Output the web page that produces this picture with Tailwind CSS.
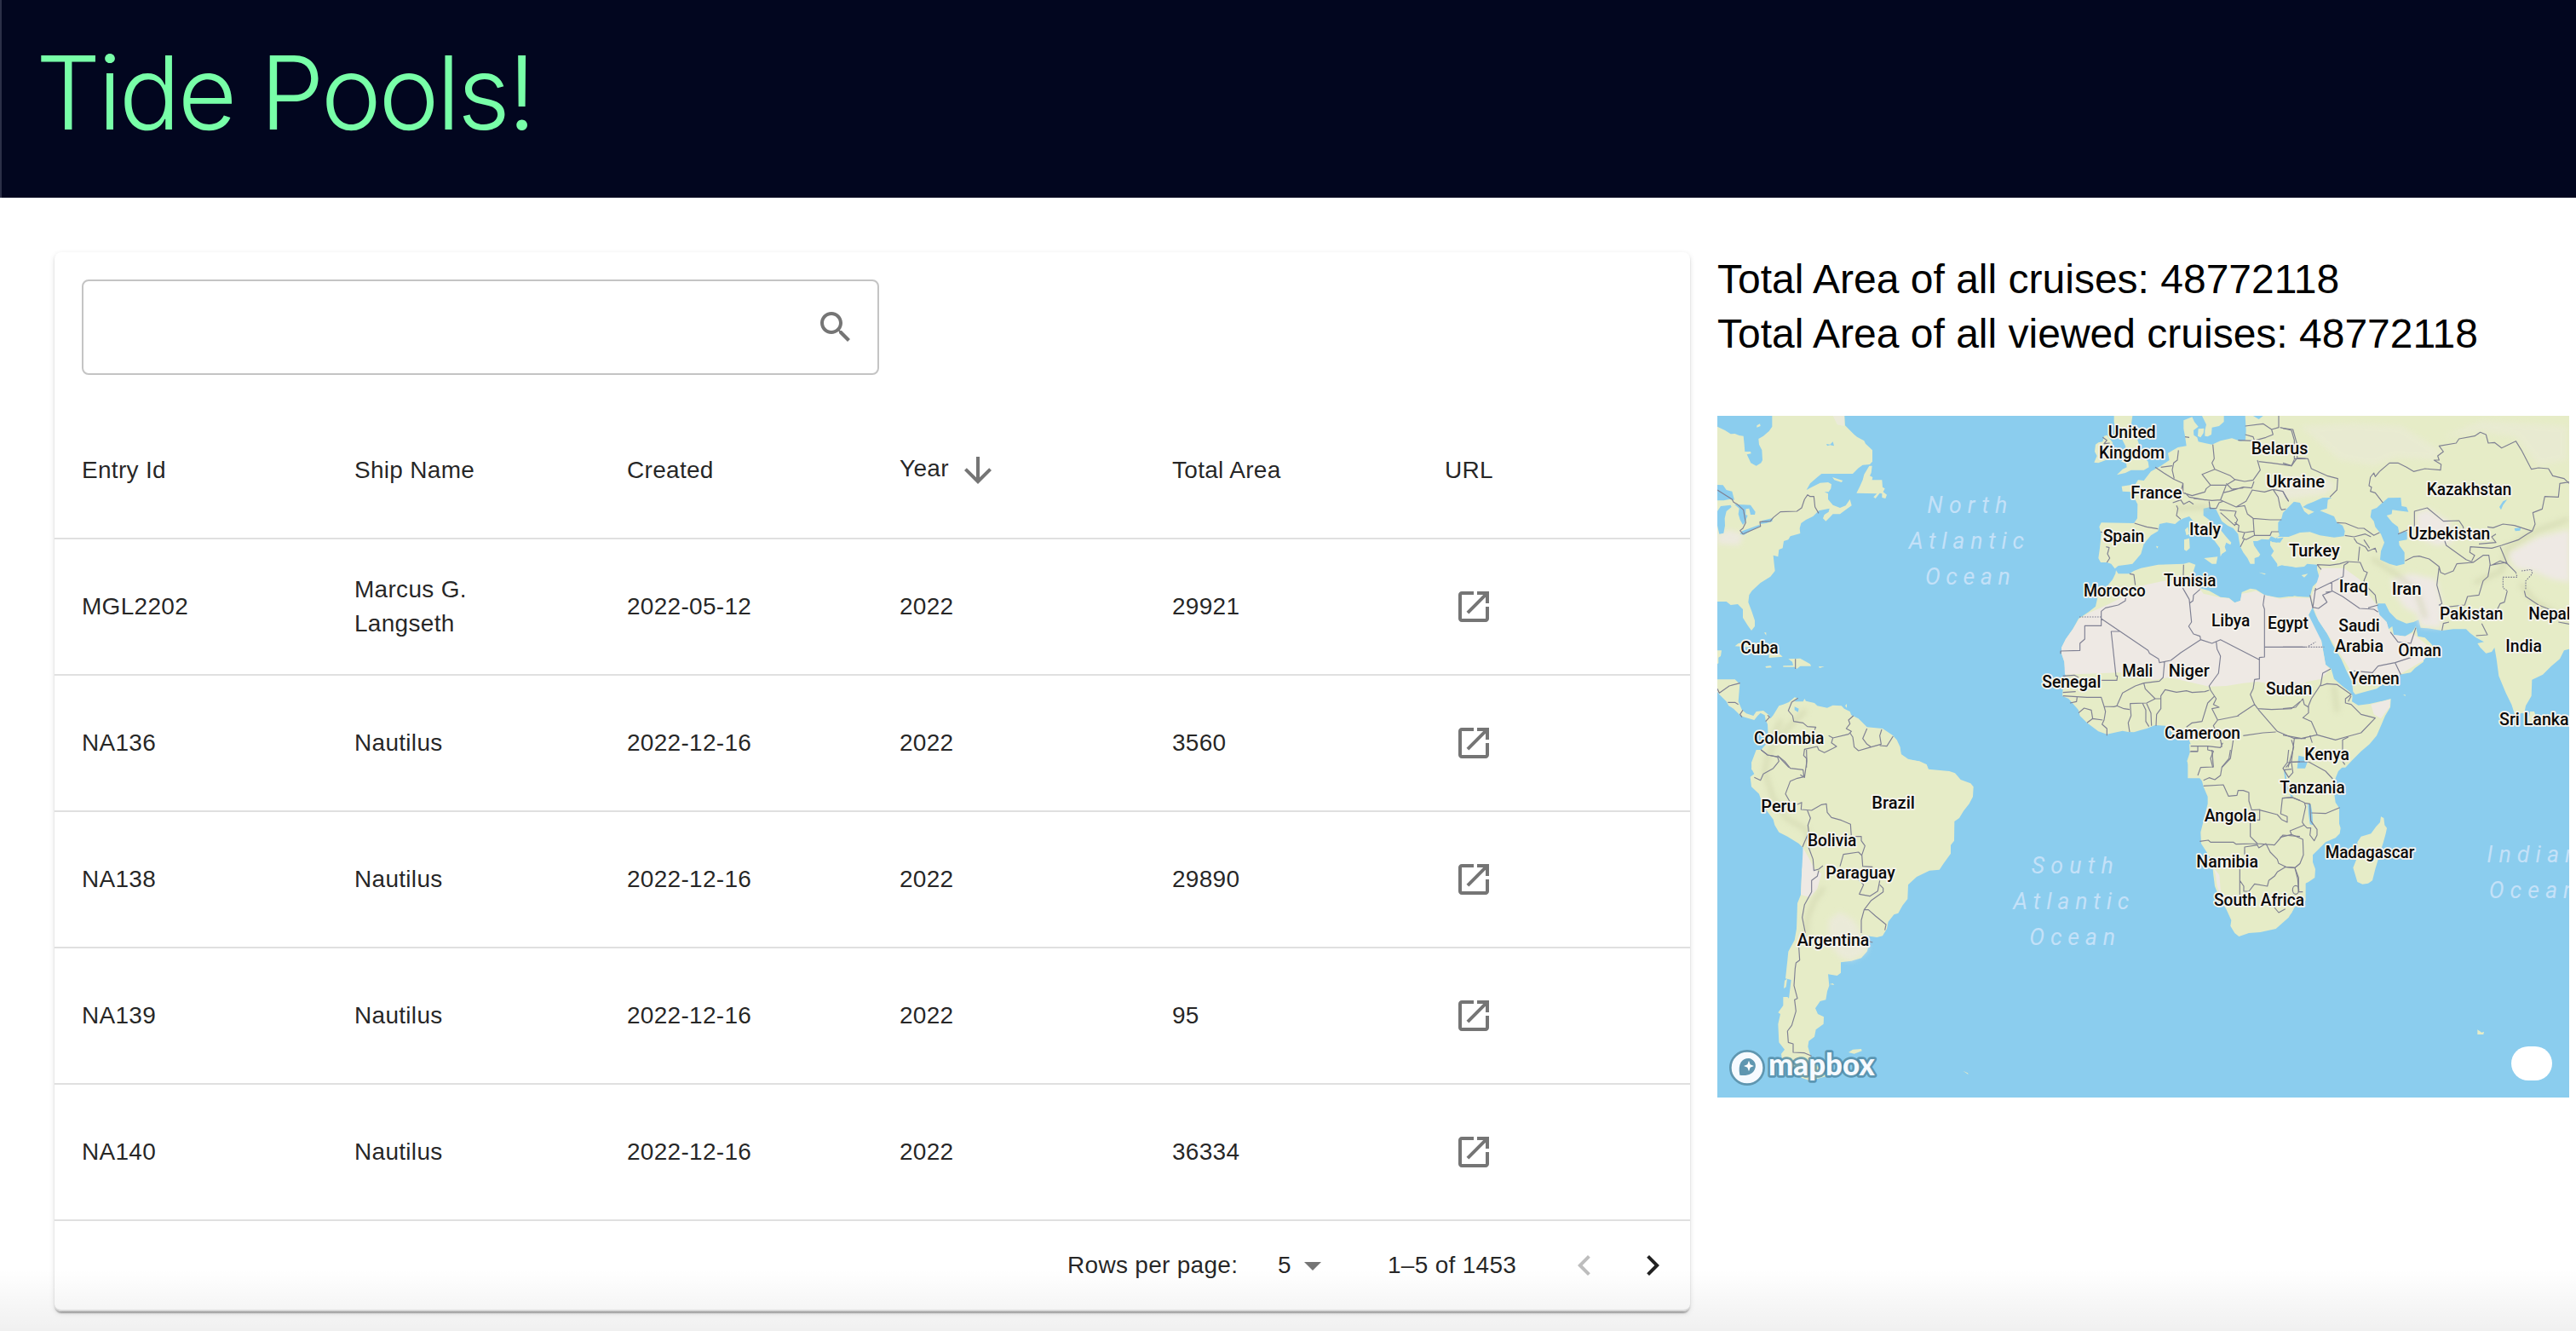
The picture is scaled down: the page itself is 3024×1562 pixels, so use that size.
<!DOCTYPE html>
<html lang="en">
<head>
<meta charset="utf-8">
<title>Tide Pools!</title>
<script src="https://cdn.jsdelivr.net/npm/@tailwindcss/browser@4"></script>
</head>
<body class="relative h-[1562px] w-[3024px] overflow-hidden bg-white font-['Liberation_Sans',Arial,sans-serif]">
<svg class="hidden">
  <symbol id="open" viewBox="0 0 24 24"><path d="M19 19H5V5h7V3H5c-1.11 0-2 .9-2 2v14c0 1.1.89 2 2 2h14c1.1 0 2-.9 2-2v-7h-2v7zM14 3v2h3.59l-9.83 9.83 1.41 1.41L19 6.41V10h2V3h-7z"/></symbol>
</svg>

<header class="flex h-[232px] items-start border-l-2 border-[#2b2f47] bg-[#02061f] pt-[37px] pl-10">
  <h1 class="font-['Inter',sans-serif] text-[120px] leading-[144px] font-light tracking-[-3.3px] whitespace-nowrap text-[#78ffa8]">Tide Pools!</h1>
</header>

<main class="flex gap-8 pt-16 pl-16">
  <section class="flex h-[1243px] w-[1920px] shrink-0 flex-col rounded-lg bg-white text-[28px] leading-10 tracking-[0.3px] text-black/87 shadow-[0_4px_2px_-2px_rgba(0,0,0,0.2),0_2px_2px_0_rgba(0,0,0,0.14),0_2px_6px_0_rgba(0,0,0,0.12)]">
    <div class="px-8 pt-8">
      <label class="flex h-28 w-[936px] items-center rounded-lg border-2 border-[#c4c4c4] pr-[25px]">
        <input class="h-full min-w-0 flex-1 px-6 outline-none" aria-label="Search">
        <svg class="size-12 fill-[#757575]" viewBox="0 0 24 24"><path d="M15.5 14h-.79l-.28-.27C15.41 12.59 16 11.11 16 9.5 16 5.91 13.09 3 9.5 3S3 5.91 3 9.5 5.91 16 9.5 16c1.61 0 3.09-.59 4.23-1.57l.27.28v.79l5 4.99L20.49 19l-4.99-5zm-6 0C7.01 14 5 11.99 5 9.5S7.01 5 9.5 5 14 7.01 14 9.5 11.99 14 9.5 14z"/></svg>
      </label>
    </div>
    <div class="mt-[33px] grid h-40 grid-cols-6 items-center border-b-2 border-[#e0e0e0] *:pl-8">
      <div>Entry Id</div><div>Ship Name</div><div>Created</div>
      <div class="flex items-center"><span class="-mt-1">Year</span><svg class="ml-2.5 size-12 fill-[#757575]" viewBox="0 0 24 24"><path d="m20 12-1.41-1.41L13 16.17V4h-2v12.17l-5.58-5.59L4 12l8 8 8-8z"/></svg></div>
      <div>Total Area</div><div>URL</div>
    </div>
    <div class="grid h-40 grid-cols-6 items-center border-b-2 border-[#e0e0e0] *:pl-8">
      <div>MGL2202</div><div>Marcus G.<br>Langseth</div><div>2022-05-12</div><div>2022</div><div>29921</div><div><svg class="ml-2.5 size-12 fill-[#757575]"><use href="#open"/></svg></div>
    </div>
    <div class="grid h-40 grid-cols-6 items-center border-b-2 border-[#e0e0e0] *:pl-8">
      <div>NA136</div><div>Nautilus</div><div>2022-12-16</div><div>2022</div><div>3560</div><div><svg class="ml-2.5 size-12 fill-[#757575]"><use href="#open"/></svg></div>
    </div>
    <div class="grid h-40 grid-cols-6 items-center border-b-2 border-[#e0e0e0] *:pl-8">
      <div>NA138</div><div>Nautilus</div><div>2022-12-16</div><div>2022</div><div>29890</div><div><svg class="ml-2.5 size-12 fill-[#757575]"><use href="#open"/></svg></div>
    </div>
    <div class="grid h-40 grid-cols-6 items-center border-b-2 border-[#e0e0e0] *:pl-8">
      <div>NA139</div><div>Nautilus</div><div>2022-12-16</div><div>2022</div><div>95</div><div><svg class="ml-2.5 size-12 fill-[#757575]"><use href="#open"/></svg></div>
    </div>
    <div class="grid h-40 grid-cols-6 items-center border-b-2 border-[#e0e0e0] *:pl-8">
      <div>NA140</div><div>Nautilus</div><div>2022-12-16</div><div>2022</div><div>36334</div><div><svg class="ml-2.5 size-12 fill-[#757575]"><use href="#open"/></svg></div>
    </div>
    <div class="flex flex-1 items-center rounded-b-lg border-b-2 border-[#e0e0e0] pl-[1189px]">
      <span class="w-[247px]">Rows per page:</span>
      <span class="w-[17px]">5</span>
      <svg class="size-12 fill-[#757575]" viewBox="0 0 24 24"><path d="m7 10 5 5 5-5z"/></svg>
      <span class="ml-16 w-[207px] whitespace-nowrap">1–5 of 1453</span>
      <svg class="size-12 fill-black/26" viewBox="0 0 24 24"><path d="M15.41 16.59 10.83 12l4.58-4.59L14 6l-6 6 6 6 1.41-1.41z"/></svg>
      <svg class="ml-8 size-12 fill-black/87" viewBox="0 0 24 24"><path d="M8.59 16.59 13.17 12 8.59 7.41 10 6l6 6-6 6-1.41-1.41z"/></svg>
    </div>
  </section>

  <section class="w-[1000px] shrink-0">
    <div class="mb-16 text-[48px] leading-16 whitespace-nowrap text-black">
      <p>Total Area of all cruises: 48772118</p>
      <p>Total Area of all viewed cruises: 48772118</p>
    </div>
    <svg class="block h-[800px] w-[1000px] bg-[#8bcdee]" viewBox="18 24 3000 2400" font-family="Roboto, sans-serif">
      <defs><filter id="soft" x="-20%" y="-20%" width="140%" height="140%"><feGaussianBlur stdDeviation="10"/></filter></defs>
      <!-- land -->
      <g fill="#e6ecc7">
        <!-- North America, Caribbean, north of South America -->
        <g>
          <path d="M18 62 45 75 65 88 80 87 95 93 110 95 113 125 115 150 135 150 137 157 122 160 136 190 155 200 172 190 177 180 175 145 165 125 163 105 180 95 200 78 211 62V24H466L468 58 485 75 500 90 510 98 535 112 540 122 564 145V185L555 195 530 197 515 208 495 228H385L370 240 345 262 332 285 350 275 380 260 408 258 420 265 418 280 410 292 395 292 408 298V318L425 338 450 348 470 340 485 318 491 340 470 355 450 370 425 370 415 380 400 395 390 385 395 372 410 362 413 350 375 358 355 378 330 390 313 402 308 420 310 438 275 448 268 460 252 465 248 490 235 495 232 520 215 515 218 545 221 570 205 590 170 612 140 640 130 655 127 680 140 715 150 745V765L138 780 125 762 108 735V705L90 687 65 690 50 678H18Z"/>
          <path d="M553 200 563 200 560 225 555 235 565 240 563 250H598L600 275 608 280 602 292 615 302 610 315 598 312V298L590 296 575 315 568 310 580 298 508 296 520 272 530 250 535 230ZM423 240 460 252 455 258 430 250ZM157 58 168 52 170 60 157 65ZM80 835 92 825 110 822 150 822 200 850 240 865 248 872 200 876V865L150 840ZM187 906 205 904 210 910 190 911ZM268 880 310 878 345 898 348 905 310 905 298 915 290 908 250 908V904L285 903 282 890ZM375 906 395 907 378 912ZM183 787 190 787 190 797ZM18 850 33 850 30 870 22 875 22 895 18 898Z"/>
          <path d="M18 952H80L97 968 92 1030 105 1060 120 1072 145 1080 155 1065 180 1062 200 1078 205 1090 215 1078 235 1045 250 1040 270 1032 290 1015 300 1018 290 1030 320 1030 325 1020 330 1028 360 1035 370 1045 405 1052 425 1043 455 1045 465 1055 485 1065 490 1078 515 1090 545 1120 600 1125 635 1148 650 1165 662 1190 665 1215 690 1232 725 1240 755 1252 760 1270H138L140 1245 155 1220 172 1200 190 1180 197 1150 195 1110 188 1095 185 1078 170 1070 160 1080 148 1095 130 1090 115 1085 100 1080 75 1055 58 1045 50 1030 25 1005 18 995ZM468 1045 474 1038 474 1052Z"/>
        </g>
        <!-- South America -->
        <g transform="translate(0 1200)">
          <path d="M155 0H662L665 16 690 35 730 40 755 52 762 68 835 75 855 82 875 105 910 118 920 130 918 165 905 190 885 215 870 240 853 252 852 320 840 335V365L815 400 800 422 765 425 745 435 720 447 690 475 688 525 670 548 655 575 640 580 620 605 615 630 600 655 580 660 545 655 525 652 550 672 552 690 545 710 525 733 490 743 453 748V785L440 795 408 790 412 830 405 850 400 880 380 885 363 910 372 930 393 940 392 965 365 985 360 1010 340 1025 337 1045 350 1090 385 1130 400 1150 345 1165 315 1155 290 1130 245 1085 243 1070 255 1055 235 1030 232 965 240 930 232 925 250 900V870L265 870 270 875 278 810 258 805 265 740 268 710 290 670 297 630 300 540 312 510 316 420 322 400 320 345 305 330 265 305 235 290 220 265 215 245 185 205 170 170 165 155 138 130 134 95 148 85 140 70 138 45Z"/>
          <path d="M480 1065 495 1055 525 1053 527 1060 500 1070ZM883 1130 900 1138 902 1143ZM413 825 425 822 430 828ZM252 840 255 812 264 806 260 835Z"/>
        </g>
        <!-- Europe and north-west Africa -->
        <g transform="translate(990 0)">
          <path d="M425 24H490L485 60 500 85 515 130 530 170 545 185 548 205 530 215 485 215 465 225 435 232 455 212 470 205 468 190 450 185 470 165 465 130 450 100 430 70 425 45ZM370 118 385 115 390 95 400 92 420 118 415 150 410 175 370 190 355 188 365 165 357 150 360 125Z"/>
          <path d="M670 40 700 28 708 45 722 62 705 75 706 92 718 100 722 115 745 120 770 125 800 112 840 103 870 113 888 110 890 75 887 24H1100V325H1060L1040 345 1020 365 1015 385 1003 400V430L1008 445 995 455 978 448 970 460 945 458 930 465 915 465 918 480 940 512 935 520 920 525V545H905L895 525 880 505 870 485 865 460 862 440 845 420 825 410 805 395 795 375 785 355 765 345 740 350V375L760 390 770 405 800 425 820 450 838 470 835 478 820 470 815 485 820 500 805 510 800 520 798 490 780 465 760 445 735 430 720 410 700 390 690 378 670 385 655 392 640 405 610 400 585 405 580 430 555 445 530 475 520 510 490 545 470 548 440 552 428 562 415 545 400 540H378L370 525 375 490 380 440 373 415 380 400 495 402 507 385 508 335 495 310 485 292 455 290 452 272 500 265 510 250 530 252 555 220 590 200 620 180 615 155 650 135 680 130 675 95 670 70Z"/>
          <path d="M735 24H812V45L795 60 770 65 768 90 755 97 745 95V75L750 55ZM722 70 742 68 740 85 730 100 720 95ZM672 460 690 455 692 490 680 500 672 495ZM675 425 685 415 690 440 680 445ZM742 525 790 520 785 545 770 545ZM935 575 960 580 955 583ZM573 482 581 484 577 491ZM975 465 1000 470 1040 468 1100 440V548L1060 555 1025 552 1000 545 978 515 988 500 975 480Z"/>
          <path d="M432 568 440 580H480L495 570 520 560 580 548 670 545 690 540 712 548 705 570 712 590 705 600 725 630 760 640 800 662 830 665 850 682 870 675 875 645 905 632 925 635 955 655 1010 665 1030 670 1060 658 1100 665V1300H685V1240L695 1205V1180L685 1155 670 1150 640 1150 605 1115 570 1113 540 1125 520 1130 495 1138 475 1137 455 1133 400 1145 370 1135 330 1105 305 1080 300 1060 265 1020 243 1010 245 985 240 970 255 940 250 890 240 860V840L255 810 280 775 300 738 335 715 360 695 370 650 400 625 420 600 430 580Z"/>
        </g>
        <!-- Asia, Arabia and the Horn of Africa -->
        <g transform="translate(2010 0)">
          <path d="M-20 24H1010V845L990 850 975 880 945 905 915 935 877 953 875 1010 855 1045 850 1070 815 1072 805 1040 785 1000 760 940 752 880 745 840 735 855 715 860 695 840 685 825 708 820 680 805 660 790 645 775H600L560 780 510 772 485 770 478 742 460 750 435 755 400 740 375 715 360 685H335L330 695 340 725 365 750 372 775 385 765 390 795 430 800 455 785 468 765 475 800 500 805 525 830 530 850 520 865 495 880V890L465 912 450 928 410 935 370 955 330 985 290 995 255 1005 247 995 243 960 225 925 205 880 175 830 155 790 125 745 115 725 105 700 95 660 105 625 130 600 120 565V548L85 545 75 555 45 558 0 548-20 555V450L20 450 60 435 95 433 130 445 180 452 215 448 218 430 210 410 190 400 180 378 160 370 130 358 155 350 158 320 172 312H140L105 328 85 335 70 345 110 362 90 372 75 360 60 330 30 325H-20Z"/>
          <path d="M-20 665 20 660 50 660 95 662 103 700 90 725 105 760 120 795 135 815 145 870 150 900 170 915 180 950 215 980 235 995 245 1010 243 1030 265 1043 305 1038 350 1028 380 1020 378 1050 360 1080 345 1115 330 1150 305 1180 275 1205 245 1235 220 1262H-20ZM65 585 88 580 75 593ZM870 1065 885 1065 893 1090 890 1110 875 1120 865 1095ZM423 1006 431 1006 431 1011Z"/>
        </g>
        <!-- Southern Africa -->
        <g transform="translate(990 1200)"><path d="M690-20 692 10 682 40 690 60 720 90 735 110 740 130 755 165V190L745 230 730 290 732 330 745 350 770 390 775 440 780 480 800 530 820 560 838 600 835 620 850 645 865 657 900 645 940 642 995 630 1040 590 1060 555 1100 530V-20Z"/></g>
        <g transform="translate(2010 1200)"><path d="M-20-20H285L265 0 225 45 195 75 185 100 180 150 185 185 198 205V260L203 275 200 295 185 310 150 325 125 350 105 370V395L114 420 112 450 90 465 70 475 60 520 45 545 30 575 0 605-20 615ZM345 235 355 240 358 265 366 275 362 295 355 320 340 370 325 420 315 460 300 470 280 473 262 465 253 435 247 415 265 370 262 325 275 305 310 295 328 270 342 255ZM685 985 700 995 708 992 706 1002 685 1002Z"/></g>
      </g>
      <!-- dry regions -->
      <g fill="#eee9e4">
        <path transform="translate(990 0)" d="M303 738 340 716 400 690 460 660 530 620 600 605 660 605 700 612 725 630 740 650 800 664 830 667 850 682 870 675 875 650 905 645 925 640 955 655 1010 668 1060 664 1100 665V965L1000 972 930 960 880 965 820 975 760 977 620 945 560 955 530 930 440 928 252 935 250 890 240 860V840L255 810 280 775Z"/>
        <g transform="translate(2010 0)">
          <path d="M-20 670 95 665 103 700 90 725 135 815 150 900 165 915 135 950 60 965-20 965ZM108 700 100 660 115 625 135 560 215 560 270 600 300 650 330 690 340 725 365 750 372 775 390 795 430 800 455 790 475 805 525 845 495 885 410 935 330 975 260 960 225 900 175 820 125 745ZM310 1040 378 1022 375 1050 345 1090 320 1075Z"/>
          <path d="M380 600 450 580 540 600 560 690 555 770 485 765 470 720 430 700 400 660ZM790 510 900 450 1010 425V610L950 600 880 570 820 560ZM470 365 510 352 590 400 600 470 540 480 470 450Z" filter="url(#soft)"/>
          <path d="M-20 240 150 245 185 270 150 300 30 315-20 315Z" opacity=".6" filter="url(#soft)"/>
          <path d="M60 60 250 50 420 60 560 150 530 180 400 170 320 200 200 180ZM560 100 700 40 1000 60 1000 180 900 200 820 100 700 80Z" opacity=".35" filter="url(#soft)"/>
        </g>
        <path transform="translate(0 1200)" d="M320 345 340 380 360 420 385 435 370 490 345 520 312 510 316 420Z"/>
        <path transform="translate(0 1200)" d="M410 600 450 570 500 600 525 650 550 690 540 715 490 743 450 730 410 680Z" opacity=".6" filter="url(#soft)"/>
        <path d="M18 440 60 425 110 440 95 480 18 475Z" opacity=".8" filter="url(#soft)"/>
        <path d="M425 24H465V60L440 55Z" opacity=".6"/>
        <path d="M1765 1615 1773 1640 1778 1680 1800 1735 1790 1690 1786 1640Z"/>
      </g>
      <!-- relief -->
      <g fill="none" stroke="#c9cda6" stroke-width="16" stroke-linecap="round" stroke-linejoin="round" opacity=".5" filter="url(#soft)">
        <path d="M325 1065 280 1110 230 1160 195 1225 185 1280 215 1370 260 1440 330 1480 345 1530M390 1690 360 1730 335 1790 330 1850M240 1100 215 1150"/>
        <path d="M2330 530 2400 575 2480 640 2510 730M2690 610 2780 570 2800 490 2900 430 3010 390M2850 620 2900 680 3010 740M1640 350 1740 345M2190 980 2200 1060"/>
      </g>
      <!-- lakes and inland seas -->
      <g fill="#8bcdee">
        <path d="M18 267 38 268 50 285 70 290 78 320 60 318 40 322 18 322ZM18 360 30 342 65 338 68 345 50 360 44 385 45 410 40 437 25 440 18 410ZM78 335 135 338 152 362 150 372 135 372 130 350 118 352 118 372 125 375 115 400 108 408 98 390 92 370 95 350ZM98 440 105 430 165 408 170 412 130 432 112 443ZM168 405 175 393 210 385 212 395 190 402ZM402 123 415 125 425 115 429 130 415 127 405 130ZM290 1048 305 1055 302 1067 290 1060Z"/>
        <path transform="translate(2010 0)" d="M350 330 370 313 415 312 418 342 435 345 442 362 405 358 385 355 383 370 365 375 385 400 405 415 410 440 425 430 437 432V460L408 465 410 480 428 505V545L400 552 375 545 342 530 345 500 357 470 345 440 325 415 320 395 308 380 312 355 330 348ZM790 318 775 338 768 355 762 345 775 325ZM815 420 838 418 835 428 818 430ZM2 452-10 470-40 468-35 458Z"/>
        <path transform="translate(2010 1200)" d="M55 20 75 25 88 38 78 65 50 65ZM88 190 98 192 103 220 106 265 95 262 90 225ZM3 70 8 72 17 130 36 165 28 165 10 130Z"/>
        <path d="M1905 24H1940L1925 36Z"/>
      </g>
      <!-- borders -->
      <g fill="none" stroke="#7f8093" stroke-width="3.5" stroke-linejoin="round">
        <path d="M18 285 70 318 75 328 88 335 110 355 118 400 108 420 98 428 108 440 170 413 168 397 205 395 215 382 240 362 298 360 315 348 325 318 336 302 345 308 358 308 362 345 375 367M18 985 25 1000 60 975 98 965M55 1033 80 1033 92 1040M108 1060 98 1075 105 1085M195 1078 202 1085 188 1100M302 1018 280 1032 268 1062 283 1080 287 1100 320 1105 335 1118 365 1120 360 1130M410 1150 425 1158 480 1145 490 1135 472 1125 485 1108 480 1095 497 1080M485 1140 495 1155 500 1190 515 1203 560 1190 545 1180 530 1160 545 1125M560 1190 595 1180 590 1150 597 1128M590 1185 615 1187 637 1152M425 1158 420 1175 438 1188 425 1195 395 1210 375 1200 370 1188 325 1198 322 1220 332 1230V1262M172 1200 195 1218 235 1225 270 1262M293 880V915"/>
        <path transform="translate(0 1200)" d="M172 0 195 18 230 25 235 40 215 65 180 85 170 107 148 97M230 20 255 40 275 65 320 70 323 95 300 100 275 110 258 155 275 185M332 0 333 40 325 97 310 88M300 192 315 185 313 210 350 213 385 193 402 190 405 220 420 238 455 248 487 262 490 305H525V320L538 338 527 370 530 410 565 412M335 213 346 240 337 265 340 290 325 325 318 342M335 300 340 345 355 385 358 425 375 420 390 408M375 425 370 445 350 460 350 500 325 545 317 590 328 645M305 695 308 740 295 750 292 770 288 830 300 875 290 880 295 920 280 970 265 990 268 1030 285 1035V1065L325 1067 350 1078M450 410 462 368 515 360 527 372M485 445 520 460 533 475 518 508 555 515 583 497 590 460M590 475 602 487V500L560 530 535 563 525 600V645M535 563 550 563 575 585 612 615 608 635M545 672 565 678"/>
        <path transform="translate(990 0)" d="M480 580 495 583 500 620M466 665 465 675 440 690 395 700 380 712V763H322V810L305 825V850L237 852V862M380 738 545 850 550 860 582 880 585 893 625 885 660 858 730 812 728 800 705 792 688 765 698 750 690 670 668 632 670 548M728 635 705 655 703 675 692 683M730 812 770 825 800 812 937 883M445 783H415L432 940 437 940 435 955H380M955 655 950 690 955 705V873L937 875V950L920 952 915 985 905 1005 920 1040M955 838H1090M785 820 788 845 800 870 793 930 760 975 765 990M603 890 598 945 585 958 530 965 500 975 455 1000 435 1045M760 990 745 995 700 998 680 992 645 997 605 988 590 1010V1055L575 1075 573 1115M530 965 535 985 570 1020 540 1035 482 1037 485 1080 475 1105 480 1137M540 1037 555 1070 557 1115M525 1035 537 1060V1100L548 1118M570 1020 590 1020M435 1045 425 1048 390 1047 380 1015 330 1015 245 1010M245 998 290 995M245 940 285 937 300 945M435 1045 460 1055 480 1058M390 1047 395 1065 390 1095 383 1110 400 1125V1150M300 1070 320 1053 345 1060 350 1090 330 1105M350 1090 385 1095M270 1035 293 1030 295 1015M765 990 785 1020 775 1040 795 1050 770 1055 790 1095 865 1080M780 1010 755 1035 735 1100 700 1105 680 1120M790 1095 775 1115 800 1165 805 1190M860 1080 920 1040 935 1060 1000 1135 1060 1160 1100 1160M880 1150 950 1140 995 1137M695 1187 755 1187 800 1192 808 1175M695 1205H720V1187M755 1187V1200L775 1205 765 1230 773 1262M845 1165 835 1230 805 1262M1060 1160 1050 1240 1030 1262M930 1055 980 1058 1050 1055 1080 1030"/>
        <path transform="translate(990 0)" d="M497 402 540 415 580 422M378 432 385 435M397 485 408 488 402 510 410 525 400 540M570 205 600 225 635 247 668 262 660 290M652 145 648 180 635 190 630 215 637 245M590 205 630 200M385 100 400 110 390 122 410 120M668 262V295L700 305 745 292 750 280 765 268 735 230 780 212 770 190 778 175 773 125M780 212 835 235 850 248 885 255 915 250 940 215 930 180M765 268 820 268 850 250M820 268 808 300 800 320 770 322 705 315M632 330 660 320 670 335 690 325 705 335M645 340 650 350 645 375 660 388M675 295 690 310 745 320M808 295 830 290 880 275 910 278 918 255M820 262 840 282 880 278M800 320 855 345 890 325 912 285M910 285 955 292 985 283 1003 310 1010 345 1015 355 1030 352M760 325 763 350 785 350 795 330 808 325M797 355 855 360 850 375 860 390 850 410 800 365M855 345 885 340 895 370 915 385 975 390 1015 390M915 385 918 430 885 435 862 430 865 410 850 400M918 430 920 445 975 445 980 432 1005 432M885 435 878 455 890 460 920 445M885 455 870 485M985 283 1020 290 1030 310 1040 325M862 110 920 112M887 90 915 98 920 112M887 60 950 52 980 72 1005 65V24M980 72 985 90 960 100 925 110M1010 65 1050 75 1060 110V175L1100 175M935 185 980 190 1050 200 1060 178M675 98 690 100"/>
        <path transform="translate(2010 0)" d="M352 330 325 295 308 290 312 275 303 270 308 240 320 225 325 238 340 220 375 190 405 190 435 205 460 220 500 210 555 215 557 195 532 180 550 180 545 165 565 150 550 130 610 120 620 105 675 95 695 82 715 90 723 120 745 118 770 137 820 113 840 145 875 212 900 207 935 210 950 235 990 245 1008 262M1008 257 975 262 970 310 922 308 913 352 880 365 888 405 878 430 815 410 775 405 740 418 720 415M463 415V360L508 348 565 395 620 393 635 415V430M440 425 405 440M878 430 860 440 830 460 770 480 735 490 660 485 658 505 675 515 665 535M670 540 705 515 725 515 730 550 785 540 820 575M570 465 575 480 645 530 670 540 612 545 600 570 570 582 555 575 550 555 515 528 480 518 460 520 430 535M550 555 542 620 560 685 550 690 570 698 640 690 650 660 690 655 705 605 722 590 730 545M560 780 565 755 585 750M755 705 765 685 780 680 790 640M765 485 790 545 765 535 735 550M850 640 855 660 900 690 950 710M970 750 1008 757M700 755 720 795 680 798M690 475 750 470 735 450 750 440M0 190 30 200 50 172 88 175 100 210 155 235 193 245 190 285 165 310M0 68 35 72 50 125V172M0 290 20 325M190 400 220 402 265 420 285 420 320 445 340 435M218 445 250 450 290 440 310 450M250 455 260 470 290 485 300 500 325 490 330 505M285 460 305 490M270 485 265 535M120 548 165 550 200 545 225 537 272 540 285 570 297 575 285 605 300 630 325 655 330 685M230 540 215 550 212 590 110 640M120 548 135 565M172 610V640L210 660 270 702 320 705 335 715M300 700 335 690M95 655 105 700 115 630M105 698 125 702 155 680 140 655 172 642 150 645M378 785 405 820 450 825 468 770M250 922 315 928 335 905 395 893 450 875M395 893 415 935M168 915 140 930 133 970 100 1020 90 1045V1070L70 1087 100 1100 120 1145M133 975 155 967 190 970 240 1005 220 1020V1035L240 1040 275 1075 325 1088 275 1140 220 1155 185 1165 120 1147 65 1160 0 1148M240 1010 230 1030M230 1155 210 1165V1240M0 838H80M0 1055 45 1050 70 1020 75 1040 90 1050M95 1150 103 1175M30 1165 38 1190 18 1262"/>
        <path transform="translate(990 1200)" d="M740 127 810 123 828 163 858 160 862 143 880 143 900 150V180L910 212 940 210M905 250V305L930 330 855 332 845 325 765 325 757 318 727 322M885 370V342L930 335 935 345 960 330 975 360 1000 385 1005 400 1030 412 1062 415 1080 400M868 415V515M868 460 882 480V498H900L920 472 965 480 970 460 990 445 1000 430 1030 412M930 330 990 335 1020 300 1080 305M925 247H938V212L1000 228 1015 245 1035 255V235L1012 225 1018 170 1050 167 1080 178M835 0 830 30 805 60 800 90 780 105 760 98 740 107M770 0 775 60 730 62 720 90M692 6H720M1040 0 1035 45 1080 42M1062 415 1075 450V500M990 555 1005 573 1028 560M1050 45 1055 80 1040 97 1020 65 1035 45M1025 70 1050 68"/>
        <path transform="translate(2010 1200)" d="M-10 308 30 298 70 315 72 370 60 400 42 415 52 455 55 500 70 500M42 415 5 412M30 298 25 285 75 265 68 255 80 200 75 185 35 168 0 170M75 265 85 275 98 275 95 300 110 320 120 300V280L98 250 95 190 75 187M100 222 150 224 200 203M30 42 90 42 150 75 175 102M210 40 218 52"/>
        <ellipse cx="2055" cy="1693" rx="11" ry="15"/>
        <path stroke-dasharray="5 4" d="M2090 838H2155M2100 835 2125 820M1293 732H1370M2830 575 2835 592 2785 592 2785 630 2800 640M2850 570 2885 565 2888 580 2865 605 2865 635"/>
      </g>
      <!-- ocean names -->
      <g fill="#c4e1f8" font-size="80" font-style="italic">
        <text x="757" y="365" textLength="282">North</text><text x="692" y="492" textLength="406">Atlantic</text><text x="750" y="618" textLength="299">Ocean</text>
        <text x="1124" y="1635" textLength="288">South</text><text x="1060" y="1761" textLength="408">Atlantic</text><text x="1117" y="1887" textLength="302">Ocean</text>
        <text x="2728" y="1597" textLength="318">Indian</text><text x="2735" y="1722" textLength="305">Ocean</text>
      </g>
      <!-- country names -->
      <g fill="#0b0b0b" font-size="59" font-weight="500" stroke="#f5f4ee" stroke-width="11" stroke-linejoin="round" paint-order="stroke">
        <text x="100" y="861" textLength="133" lengthAdjust="spacingAndGlyphs">Cuba</text>
        <text x="147" y="1178" textLength="247" lengthAdjust="spacingAndGlyphs">Colombia</text>
        <text x="172" y="1418" textLength="124" lengthAdjust="spacingAndGlyphs">Peru</text>
        <text x="562" y="1408" textLength="152" lengthAdjust="spacingAndGlyphs">Brazil</text>
        <text x="336" y="1538" textLength="172" lengthAdjust="spacingAndGlyphs">Bolivia</text>
        <text x="400" y="1653" textLength="244" lengthAdjust="spacingAndGlyphs">Paraguay</text>
        <text x="299" y="1890" textLength="254" lengthAdjust="spacingAndGlyphs">Argentina</text>
        <text x="1394" y="102" textLength="168" lengthAdjust="spacingAndGlyphs">United</text>
        <text x="1362" y="175" textLength="231" lengthAdjust="spacingAndGlyphs">Kingdom</text>
        <text x="1474" y="314" textLength="180" lengthAdjust="spacingAndGlyphs">France</text>
        <text x="1376" y="469" textLength="146" lengthAdjust="spacingAndGlyphs">Spain</text>
        <text x="1680" y="443" textLength="111" lengthAdjust="spacingAndGlyphs">Italy</text>
        <text x="1898" y="158" textLength="200" lengthAdjust="spacingAndGlyphs">Belarus</text>
        <text x="1951" y="275" textLength="206" lengthAdjust="spacingAndGlyphs">Ukraine</text>
        <text x="1590" y="625" textLength="184" lengthAdjust="spacingAndGlyphs">Tunisia</text>
        <text x="1308" y="660" textLength="218" lengthAdjust="spacingAndGlyphs">Morocco</text>
        <text x="1758" y="766" textLength="136" lengthAdjust="spacingAndGlyphs">Libya</text>
        <text x="1956" y="775" textLength="144" lengthAdjust="spacingAndGlyphs">Egypt</text>
        <text x="1444" y="943" textLength="108" lengthAdjust="spacingAndGlyphs">Mali</text>
        <text x="1607" y="943" textLength="144" lengthAdjust="spacingAndGlyphs">Niger</text>
        <text x="1162" y="981" textLength="207" lengthAdjust="spacingAndGlyphs">Senegal</text>
        <text x="1950" y="1006" textLength="163" lengthAdjust="spacingAndGlyphs">Sudan</text>
        <text x="1593" y="1162" textLength="267" lengthAdjust="spacingAndGlyphs">Cameroon</text>
        <text x="2516" y="303" textLength="299" lengthAdjust="spacingAndGlyphs">Kazakhstan</text>
        <text x="2452" y="459" textLength="288" lengthAdjust="spacingAndGlyphs">Uzbekistan</text>
        <text x="2031" y="519" textLength="179" lengthAdjust="spacingAndGlyphs">Turkey</text>
        <text x="2207" y="646" textLength="103" lengthAdjust="spacingAndGlyphs">Iraq</text>
        <text x="2393" y="655" textLength="105" lengthAdjust="spacingAndGlyphs">Iran</text>
        <text x="2562" y="741" textLength="223" lengthAdjust="spacingAndGlyphs">Pakistan</text>
        <text x="2875" y="741" textLength="148" lengthAdjust="spacingAndGlyphs">Nepal</text>
        <text x="2206" y="783" textLength="145" lengthAdjust="spacingAndGlyphs">Saudi</text>
        <text x="2193" y="855" textLength="171" lengthAdjust="spacingAndGlyphs">Arabia</text>
        <text x="2416" y="870" textLength="152" lengthAdjust="spacingAndGlyphs">Oman</text>
        <text x="2794" y="855" textLength="128" lengthAdjust="spacingAndGlyphs">India</text>
        <text x="2243" y="969" textLength="177" lengthAdjust="spacingAndGlyphs">Yemen</text>
        <text x="2772" y="1113" textLength="245" lengthAdjust="spacingAndGlyphs">Sri Lanka</text>
        <text x="2086" y="1236" textLength="158" lengthAdjust="spacingAndGlyphs">Kenya</text>
        <text x="1999" y="1352" textLength="229" lengthAdjust="spacingAndGlyphs">Tanzania</text>
        <text x="1733" y="1452" textLength="183" lengthAdjust="spacingAndGlyphs">Angola</text>
        <text x="1705" y="1615" textLength="218" lengthAdjust="spacingAndGlyphs">Namibia</text>
        <text x="1767" y="1749" textLength="318" lengthAdjust="spacingAndGlyphs">South Africa</text>
        <text x="2159" y="1582" textLength="314" lengthAdjust="spacingAndGlyphs">Madagascar</text>
      </g>
      <!-- attribution -->
      <circle cx="123" cy="2319" r="59" fill="#f6faff" stroke="#5f96b0" stroke-width="8"/>
      <path d="M97 2345C90 2305 104 2286 128 2286A26 26 0 0 1 151 2321C145 2342 122 2349 97 2345Z" fill="#5f96b0"/>
      <path d="M129 2294 134 2308 147 2313 134 2318 129 2332 124 2318 111 2313 124 2308Z" fill="#fff"/>
      <text x="198" y="2345" font-family="Lato, sans-serif" font-size="106" font-weight="900" textLength="374" lengthAdjust="spacingAndGlyphs" fill="#f6faff" stroke="#4b849f" stroke-opacity=".75" stroke-width="16" stroke-linejoin="round" paint-order="stroke">mapbox</text>
      <rect x="2814" y="2244" width="144" height="120" rx="60" fill="#fff"/>
    </svg>
  </section>
</main>
<div class="pointer-events-none absolute inset-x-0 bottom-0 h-[72px] bg-linear-to-b from-transparent to-black/6"></div>
</body>
</html>
